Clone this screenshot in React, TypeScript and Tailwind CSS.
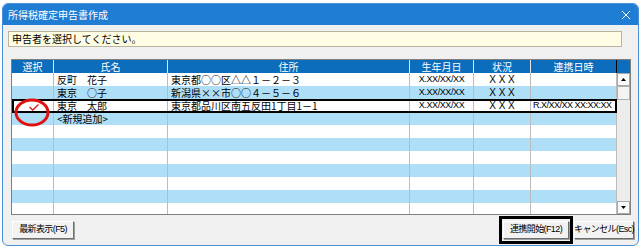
import React from 'react';

const rows = [
  { name: '反町　花子', addr: '東京都○○区△△１－２－３', birth: 'X.XX/XX/XX', status: 'X X X', date: '' },
  { name: '東京　○子', addr: '新潟県××市○○４－５－６', birth: 'X.XX/XX/XX', status: 'X X X', date: '' },
  { name: '東京　太郎', addr: '東京都品川区南五反田1丁目1－1', birth: 'X.XX/XX/XX', status: 'X X X', date: 'R.X/XX/XX XX:XX:XX' },
  { name: '<新規追加>', addr: '', birth: '', status: '', date: '' },
];

const grid = 'grid grid-cols-[42px_114px_242px_64px_57px_86px]';
const cjk = "font-['Noto_Sans_CJK_JP',sans-serif]";

const WinButton = ({ label, w }: { label: string; w: string }) => (
  <button
    className={`${w} h-[18px] flex items-center justify-center bg-[#f2f2f2] border border-t-white border-l-white border-r-[#6d6d6d] border-b-[#6d6d6d] shadow-[1px_1px_0_#a0a0a0] text-[9px] leading-none tracking-[-0.6px] whitespace-nowrap text-black`}
  >
    {label}
  </button>
);

export default function App() {
  const filled = [...rows, ...Array.from({ length: 7 }, () => null)];

  return (
    <div className="w-[642px] h-[249px] bg-white pt-[3px] pl-[2px] font-['Liberation_Sans','Noto_Sans_CJK_JP',sans-serif]">
      <div className="w-[637px] h-[243px] flex flex-col rounded-[6px] overflow-hidden border border-[#4a90d9] bg-[#f0f0f0]">
        {/* title bar */}
        <div className="h-[21px] shrink-0 bg-[#1f7dd4] flex items-center justify-between pl-[5px] pr-[6px]">
          <span className={`text-white text-[10px] leading-none ${cjk}`}>所得税確定申告書作成</span>
          <svg width="10" height="10" viewBox="0 0 10 10" className="mr-[1px]">
            <path d="M1 1 L9 9 M9 1 L1 9" stroke="white" strokeWidth="1" />
          </svg>
        </div>

        <div className="flex-1 flex flex-col pl-[5px]">
          {/* message */}
          <div className={`mt-[6px] w-[614px] h-[16px] bg-[#fffde3] border border-[#b8b4a0] flex items-center pl-[3px] text-[10px] leading-none text-black ${cjk}`}>
            申告者を選択してください。
          </div>

          {/* table */}
          <div className="relative mt-[12px] ml-[3px] w-[620px] h-[156px] border border-[#7f7f7f] bg-white overflow-hidden flex">
            <div className="w-[605px] flex flex-col">
              <div className={`${grid} h-[13px] bg-[#0b6dbc] text-white text-[10px] leading-[13px] text-center ${cjk}`}>
                <div className="border-r border-[#e6e6e6]">選択</div>
                <div className="border-r border-[#e6e6e6]">氏名</div>
                <div className="border-r border-[#e6e6e6]">住所</div>
                <div className="border-r border-[#e6e6e6]">生年月日</div>
                <div className="border-r border-[#e6e6e6]">状況</div>
                <div className="border-r border-black">連携日時</div>
              </div>
              {filled.map((r, i) => (
                <div
                  key={i}
                  className={`${grid} h-[13px] shrink-0 text-[10px] leading-[13px] text-black overflow-hidden ${i % 2 === 1 ? 'bg-[#afdff7]' : 'bg-white'}`}
                >
                  <div className="border-r border-[#bcbcbc]" />
                  <div className={`border-r border-[#bcbcbc] pl-[3px] whitespace-nowrap h-[13px] ${cjk}`}>{r?.name}</div>
                  <div className={`border-r border-[#bcbcbc] pl-[3px] whitespace-nowrap h-[13px] ${cjk}`}>{r?.addr}</div>
                  <div className="border-r border-[#bcbcbc] text-center text-[9px] tracking-[-0.4px] whitespace-nowrap">{r?.birth}</div>
                  <div className="border-r border-[#bcbcbc] text-center whitespace-nowrap">{r?.status}</div>
                  <div className="border-r border-[#bcbcbc] pl-[2px] text-[9px] tracking-[-0.5px] whitespace-nowrap overflow-hidden">{r?.date}</div>
                </div>
              ))}
            </div>

            {/* scrollbar */}
            <div className="w-[13px] flex flex-col bg-[#ececec]">
              <div className="h-[13px] bg-[#0b6dbc]" />
              <div className="h-[13px] bg-[#fafafa] border border-[#a8a8a8] flex items-center justify-center">
                <svg width="5" height="3" viewBox="0 0 5 3"><path d="M0 3 L2.5 0 L5 3Z" fill="black" /></svg>
              </div>
              <div className="h-[14px] bg-[#f4f4f4] border border-[#b0b0b0]" />
              <div className="flex-1" />
              <div className="h-[13px] bg-[#fafafa] border border-[#a8a8a8] flex items-center justify-center">
                <svg width="5" height="3" viewBox="0 0 5 3"><path d="M0 0 L2.5 3 L5 0Z" fill="black" /></svg>
              </div>
            </div>

            {/* selected row frame */}
            <div className="absolute left-0 top-[39px] w-[605px] h-[14px] border-2 border-black pointer-events-none" />

            {/* check mark */}
            <svg className="absolute left-[17px] top-[44px]" width="10" height="7" viewBox="0 0 10 7">
              <path d="M0.5 3 L3.8 6 L9.5 0.5" stroke="#d42020" strokeWidth="1.4" fill="none" />
            </svg>

            {/* red circle */}
            <svg className="absolute left-[2px] top-[38px]" width="36" height="29" viewBox="0 0 36 29">
              <ellipse cx="18" cy="14.5" rx="16" ry="12.5" stroke="#e01010" strokeWidth="3" fill="none" />
            </svg>
          </div>

          {/* buttons */}
          <div className="h-[29px] flex items-center ml-[4px] mr-[4px]">
            <WinButton label="最新表示(F5)" w="w-[62px]" />
            <div className="flex-1" />
            <div className="border-[3px] border-black px-[1px] py-[2px] flex">
              <WinButton label="連携開始(F12)" w="w-[66px]" />
            </div>
            <div className="ml-[1px]">
              <WinButton label="キャンセル(Esc)" w="w-[60px]" />
            </div>
          </div>
        </div>
      </div>
    </div>
  );
}
